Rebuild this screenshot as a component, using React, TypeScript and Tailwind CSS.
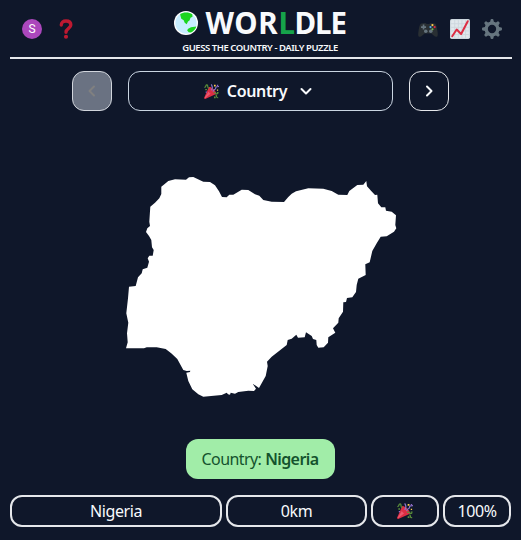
import React from "react";

function PartyIcon({ className }: { className: string }) {
  return (
    <svg viewBox="0 0 36 36" className={className} aria-hidden="true">
      <path fill="#DD2E44" d="M11.600 7.600c-.1.1-.2.3-.3.5L.1 33.300c-.4 1.500.9 3 2.600 2.600l25.200-11.200c.3-.1.5-.2.6-.4 1.600-1.600-.6-6.300-4.900-10.600s-10.300-7.800-12-6.100z" />
      <path fill="#EA596E" d="M11 18L2 32c-.6 1.500.3 2.300 1.400 2L16 23c-3-1-4-3-5-5z" />
      <path fill="#DD2E44" d="M23 13c4 4.300 6.800 9.300 5.200 11-1.800 1.600-6.700-1.200-11-5.600S10.500 9.300 12 7.700 19 9 23 13z" />
      <path fill="none" stroke="#8C74C9" strokeWidth="2.800" strokeLinecap="round" d="M18 14c3-3 2-8 0-12M22 17c1-5 6-3 6-7s4-4 7-4" />
      <path fill="none" stroke="#5C913B" strokeWidth="2.800" strokeLinecap="round" d="M2 8c4-2 1-6 5-6s0 7 4 8M24 21c4-3 3 5 9 2M29 27c2 2 0 6 4 6" />
      <path fill="#FFCC4D" d="M24 2h4v4h-4zM31 13h3v3h-3z" />
      <path fill="#5C913B" d="M3 12h4v3H3zM31 19h4v3h-4zM24 30h4v4h-4z" />
      <path fill="#9266CC" d="M4 18h3v3H4zM31 2h3v3h-3z" />
    </svg>
  );
}

function GlobeIcon() {
  return (
    <svg viewBox="0 0 24 24" className="h-6 w-6 shrink-0" aria-hidden="true">
      <circle cx="12" cy="12" r="12" fill="#fff" />
      <circle cx="12" cy="12" r="10.700" fill="#c7edff" />
      <path fill="#1bd51f" d="M6.200 3C9 1 15 .8 18.300 3.200l.2 2.600-2 1-1 2.600-1.500 1-1.300 2.900-2-1.500-1-2.600-2.400-1.400-.8-2.800zM14.200 17.700l2.800-1.500 5.400-.8c-.9 2.600-3 5-5.400 6l-2.300-.1-1.600-2z" />
    </svg>
  );
}

function GamepadIcon() {
  return (
    <svg viewBox="0 0 36 36" className="h-5 w-5" aria-hidden="true">
      <path fill="#292F33" d="M6 8l7-1 3 2h4l3-2 7 1c3 1 4 7 5 13 1 7 1 11-2 11-3 .4-6-4-9-6H12c-3 2-6 6.400-9 6-3 0-3-4-2-11C2 15 3 9 6 8z" />
      <path fill="#66757F" d="M8.500 10h3v3h3v3h-3v3h-3v-3h-3v-3h3z" />
      <circle cx="14" cy="22" r="3.200" fill="#66757F" />
      <circle cx="23" cy="22" r="3.200" fill="#66757F" />
      <circle cx="26" cy="11" r="2" fill="#FFCC4D" />
      <circle cx="22.500" cy="14.500" r="2" fill="#55ACEE" />
      <circle cx="30" cy="14.500" r="2" fill="#DD2E44" />
      <circle cx="26" cy="18.500" r="2" fill="#77B255" />
    </svg>
  );
}

function ChartIcon() {
  return (
    <svg viewBox="0 0 36 36" className="h-5 w-5" aria-hidden="true">
      <rect width="36" height="36" rx="3" fill="#CCD6DD" />
      <path fill="#E1E8ED" d="M2 2h32v32H2z" />
      <path stroke="#CCD6DD" strokeWidth="1.600" d="M2 8.500h32M2 15h32M2 21.500h32M2 28h32M8.500 2v32M15 2v32M21.500 2v32M28 2v32" />
      <path fill="none" stroke="#DD2E44" strokeWidth="3.600" strokeLinecap="round" strokeLinejoin="round" d="M4 31l8-12 8 8L32 4" />
    </svg>
  );
}

function GearIcon() {
  return (
    <svg viewBox="0 0 36 36" className="h-5 w-5" aria-hidden="true">
      <g fill="#66757F">
        {[0, 45, 90, 135, 180, 225, 270, 315].map((a) => (
          <path key={a} transform={`rotate(${a} 18 18)`} d="M15.500 1.300C15.500.5 16.500 0 18 0s2.500.5 2.500 1.300L22 8h-8z" />
        ))}
      </g>
      <circle cx="18" cy="18" r="10.500" fill="none" stroke="#66757F" strokeWidth="6" />
    </svg>
  );
}

function QuestionIcon() {
  return (
    <svg viewBox="0 0 36 36" className="h-5 w-5" aria-hidden="true">
      <path fill="none" stroke="#BE1931" strokeWidth="6" strokeLinecap="round" strokeLinejoin="round" d="M9.500 11C9.500 6 13 3.600 18 3.600S26.700 6 26.700 11c0 6-8.700 6-8.700 13" />
      <circle cx="18" cy="32" r="3.700" fill="#BE1931" />
    </svg>
  );
}

function Chevron({ d, className }: { d: string; className: string }) {
  return (
    <svg viewBox="0 0 14 14" className={`h-3.5 w-3.5 ${className}`} aria-hidden="true">
      <path d={d} fill="none" stroke="currentColor" strokeWidth="2" strokeLinecap="round" strokeLinejoin="round" />
    </svg>
  );
}

// Outline of Nigeria, traced clockwise from the western border.
const NIGERIA =
  "M129 286.700L135.700 286 138 277.300 141.700 273.300 142.700 269.300 147.300 267.700 149 261.700 147.700 258.300 149.300 255.700 152.700 255.700 153.700 250 152 247.300 151.300 240 149 236 146 232 147.300 228.300 150 226 149.300 221.700 150.300 206.700 155 202.700 159.300 198.300 161.300 194 161.300 186.700 164.700 184 168.300 181 175 179.300 186 179.700 189 177.300 193.300 177 203.300 181.700 210 182 215 185.300 219 191.300 222 197 226.700 197.300 229.300 194.700 233.300 194.700 241.700 189.700 248.300 190 255 194.300 259.300 195.700 263.300 200 271.700 201.700 284 202 288.300 197 291.700 193.700 296 191.300 308.300 188.300 323.300 188.700 331.700 191 338.300 194.700 347.300 195 349.300 191 357.300 185 363.300 184.700 366.300 181 367 186.300 371 190.700 375 195 377.300 194.700 378 203.300 381.300 207.300 385.300 207.300 386 210.700 391.700 211.700 396 215.300 395.300 225 396.300 228.300 394 231.700 386.700 236.300 380.700 236.700 376.700 243.300 372.300 251 369.700 262.300 365.300 264.300 365.700 275 358.300 278.700 356.700 285 356 292 352.300 297.300 347 298 346 302 343.300 302.300 343 311.700 338.700 318.300 338.300 322.700 333 328.300 335.300 332.700 328.300 337.300 328 342.700 323.700 347.300 318.300 347.700 316.700 345 316.300 340 313 339 311.700 336 306 332.300 304.700 337.300 298 337.700 296.300 334.700 291.700 338.700 287.700 340 286.700 345 271.700 356.700 267 361.700 267.700 366 265.700 376 259 388 252.700 383.700 256 388.700 254 391 248.300 390.700 238.300 392 235 393.700 230.700 392.700 230 394.700 228 394.300 226.700 392.700 221.700 395 203.300 396.700 198.300 394.300 192.300 389.300 188.300 381 186.300 372.700 190 372 190.300 370.700 186.700 371 183.300 370 177.300 359 171.500 353.500 165.700 349 156.700 347.300 146.700 347.300 144 348.300 126 348.300 127.700 342.300 127 333.300 128.300 322.700 126.300 313.300 128 298.300Z";

const cell = "flex h-8 items-center justify-center rounded-xl border-2 border-gray-200";

export default function App() {
  return (
    <div className="flex h-[540px] w-[521px] flex-col overflow-hidden bg-[#0f172a] pr-[9px] pl-2.5 font-['Noto_Sans',sans-serif] text-base text-slate-50">
      <header className="flex h-[59px] shrink-0 items-center border-b-2 border-gray-200 pr-2.5 pl-3">
        <div className="flex w-[143px] items-center gap-3.5">
          <div className="flex h-5 w-5 items-center justify-center rounded-full bg-[#ab47bc] pt-px font-[Roboto] text-xs leading-none text-white">S</div>
          <QuestionIcon />
        </div>
        <div className="flex w-[190px] flex-col items-center">
          <h1 className="flex h-8 items-center gap-2 pt-1.5 text-[29.500px] leading-7 font-bold">
            <GlobeIcon />
            <span className="flex w-[141px] whitespace-nowrap">
              <span className="w-[73px] tracking-[0.600px]">WOR</span>
              <span className="w-4 text-[#16a34a]">L</span>
              <span className="tracking-[-1px]">DLE</span>
            </span>
          </h1>
          <p className="pt-1.5 text-[9.500px] leading-3 font-semibold tracking-[-0.450px] whitespace-nowrap">GUESS THE COUNTRY - DAILY PUZZLE</p>
        </div>
        <div className="flex flex-1 items-center justify-end gap-3">
          <GamepadIcon />
          <ChartIcon />
          <GearIcon />
        </div>
      </header>

      <nav className="mt-3 flex h-10 w-[501px] shrink-0 justify-center gap-4 font-semibold">
        <button className="flex w-10 items-center justify-center rounded-xl border border-gray-300 bg-gray-500 text-[#808080]">
          <Chevron d="M9 2.500L4.500 7 9 11.500" className="" />
        </button>
        <button className="flex w-[265px] items-center justify-center rounded-xl border border-slate-300 pr-1">
          <PartyIcon className="mr-2 h-[15px] w-[15px]" />
          <span className="tracking-[-0.350px]">Country</span>
          <Chevron d="M2.500 5L7 9.500 11.500 5" className="ml-3" />
        </button>
        <button className="flex w-10 items-center justify-center rounded-xl border border-gray-200">
          <Chevron d="M5 2.500L9.500 7 5 11.500" className="" />
        </button>
      </nav>

      <main className="flex flex-1 items-start justify-center">
        <svg viewBox="120 170 282 234" className="mt-[59px] h-[234px] w-[282px]" role="img" aria-label="Nigeria">
          <path d={NIGERIA} fill="#fff" />
        </svg>
      </main>

      <div className="mr-0.5 mb-4 flex h-10 w-[149px] shrink-0 items-center justify-center gap-1 self-center rounded-xl bg-[#a1eda8] tracking-[-0.600px] whitespace-nowrap text-[#14532d]">
        <span>Country:</span>
        <span className="font-semibold">Nigeria</span>
      </div>

      <div className="mb-[13px] grid shrink-0 grid-cols-[212px_141px_68px_68px] gap-1 tracking-[-0.400px]">
        <div className={cell}>Nigeria</div>
        <div className={cell}>0km</div>
        <div className={cell}><PartyIcon className="h-4 w-4" /></div>
        <div className={cell}>100%</div>
      </div>
    </div>
  );
}
